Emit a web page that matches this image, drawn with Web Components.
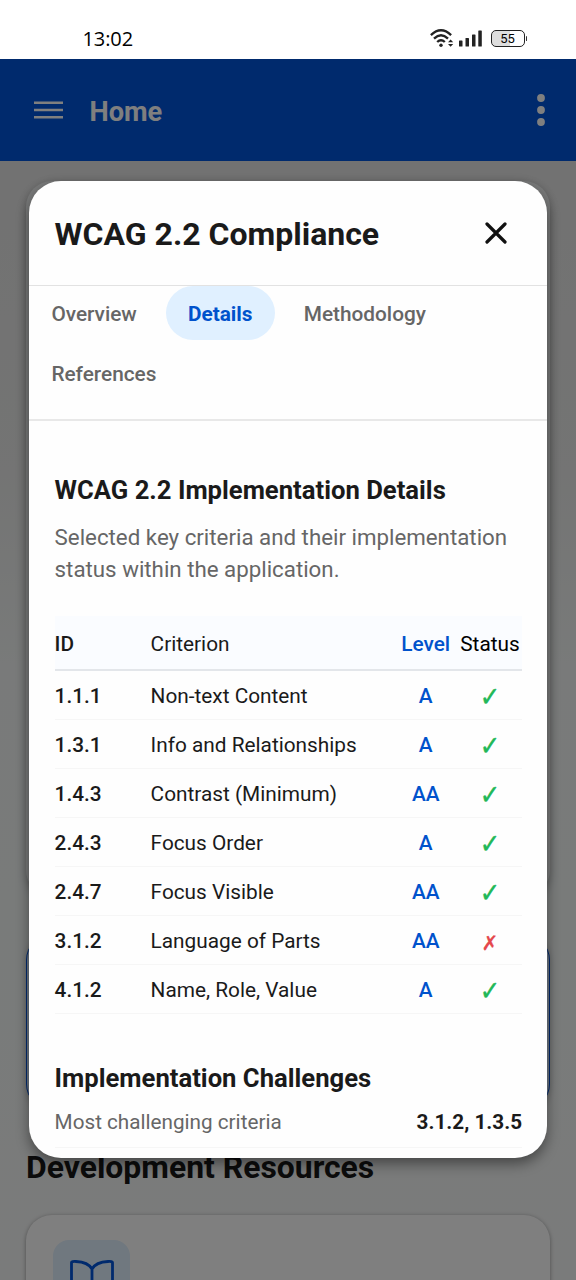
<!DOCTYPE html>
<html lang="en">
<head>
<meta charset="utf-8">
<title>WCAG 2.2 Compliance</title>
<style>
html,body{margin:0;padding:0;height:1280px;overflow:hidden;background:#fff;font-family:Roboto,"Liberation Sans",sans-serif}
</style>
</head>
<body>
<app-screen></app-screen>
<script>
function define(name, html){
  const t=document.createElement('template');
  t.innerHTML=html;
  customElements.define(name,class extends HTMLElement{
    constructor(){super();this.attachShadow({mode:'open'}).append(t.content.cloneNode(true));}
  });
}

define('status-bar',`
<style>
:host{display:flex;box-sizing:border-box;height:59px;background:#fff;padding:28px 49px 0 82.500px;justify-content:space-between;align-items:flex-start;color:#000}
.time{font:500 20px/22px "Open Sans",Roboto,sans-serif;letter-spacing:-.1px}
svg{display:block}
.right{display:flex;align-items:center;height:21px}
.signal{margin:0 9px 0 5px}
.bat{display:flex;align-items:center;gap:1px}
.cell{box-sizing:border-box;width:34px;height:17px;border:1.5px solid #222;border-radius:5px;font:400 13px/15px Roboto,sans-serif;text-align:center;background:linear-gradient(90deg,#ddd 55%,#fff 55%)}
.nub{width:1.5px;height:5px;background:#333;border-radius:1px}
</style>
<span class="time">13:02</span>
<div class="right">
<svg width="24" height="19" viewBox="0 0 24 19" fill="none" stroke="#222" stroke-width="2.400"><path d="M.9 6.2Q11 -3.6 21.1 6.2M4 9.6Q11 3 18 9.6M7.2 13Q11 9.4 14.8 13"/><circle cx="11" cy="16.300" r="1.7" fill="#222" stroke="none"/><path d="M18 13.200L20.6 10.4 23.200 13.200zM18 15L20.6 17.8 23.200 15z" fill="#222" stroke="none"/></svg>
<svg class="signal" width="23" height="17" viewBox="0 0 23 17" fill="#222"><rect y="10.5" width="3.5" height="6" rx=".6"/><rect x="6.5" y="8" width="3.5" height="8.500" rx=".6"/><rect x="13" y="4.500" width="3.500" height="12" rx=".6"/><rect x="19.300" y=".5" width="3.500" height="16" rx=".6"/></svg>
<div class="bat"><div class="cell">55</div><div class="nub"></div></div>
</div>`);

define('app-bar',`
<style>
:host{display:flex;box-sizing:border-box;height:102px;background:#0054db;align-items:center;padding:0 30px 0 33.500px;color:#fff}
.title{font:700 27.200px/32px Roboto,sans-serif;margin-left:27px;flex:1;padding-top:3px}
svg{display:block}
</style>
<svg width="29" height="18" viewBox="0 0 29 18" stroke="#fff" stroke-width="2.400"><path d="M0 1.700h29M0 9h29M0 16.300h29"/></svg>
<span class="title"><slot></slot></span>
<svg width="10" height="32" viewBox="0 0 10 32" fill="#fff"><circle cx="5" cy="4" r="3.900"/><circle cx="5" cy="16" r="3.900"/><circle cx="5" cy="28" r="3.900"/></svg>`);

define('home-page',`
<style>
:host{display:flex;flex-direction:column;box-sizing:border-box;height:1119px;padding:20px 26px 0;background:linear-gradient(#e4e4e4,#e8e9e8 28%,#f2f5f4 45%,#f2f6f5 66%,#f5f6f6);overflow:hidden}
.hero{height:715px;border-radius:26px;flex:none;background:#f0f2f2;box-shadow:0 3px 8px rgba(0,0,0,.25)}
.card{box-sizing:border-box;flex:none;border-radius:26px}
.blue{margin-top:38px;height:176px;background:#d8e8ff;border:1.600px solid #0050d8;box-shadow:0 2px 6px rgba(0,0,0,.2)}
h2{margin:39px 0 0;font:700 31.900px/36px Roboto,sans-serif;color:#181818}
.resource{margin-top:30px;height:180px;background:#fff;box-shadow:0 1px 4px rgba(0,0,0,.38);padding:25px 27px}
.icon{width:77px;height:77px;border-radius:16px;background:#e0f0ff;display:flex;align-items:center;justify-content:center}
</style>
<div class="hero"></div>
<div class="card blue"></div>
<h2>Development Resources</h2>
<div class="card resource"><div class="icon"><svg width="48" height="48" viewBox="0 0 48 48" fill="none" stroke="#0054db" stroke-width="2.800" stroke-linejoin="round"><path d="M24 14Q20 7 8 6.500q-4.500-.2-4.500 1v31Q20 37 24 42Q28 37 44.500 38.500v-31q0-1.200-4.500-1Q28 7 24 14v28"/></svg></div></div>`);

define('modal-header',`
<style>
:host{display:flex;box-sizing:border-box;height:105px;border-bottom:1px solid #e2e2e2;align-items:center;justify-content:space-between;padding:0 40.500px 0 25.600px;color:#1a1a1a}
h1{margin:0;font:700 32px/38px Roboto,sans-serif;padding-top:2px}
svg{display:block}
</style>
<h1><slot></slot></h1>
<svg width="22" height="22" viewBox="0 0 22 22" stroke="#111" stroke-width="3.200" stroke-linecap="round"><path d="M2 2l18 18M20 2L2 20"/></svg>`);

define('tab-item',`
<style>
:host{display:flex;align-items:center;box-sizing:border-box;height:54px;padding:2px 22.400px 0;border-radius:27px;font:500 20.800px/25px Roboto,sans-serif;color:#666}
:host([active]){background:#e0f0ff;color:#0052cc;font-weight:700}
</style><slot></slot>`);

define('tab-bar',`
<style>
:host{display:flex;flex-wrap:wrap;align-content:flex-start;box-sizing:border-box;height:135px;column-gap:6.400px;row-gap:6px;border-bottom:2px solid #e8e8e8}
</style><slot></slot>`);

define('criteria-row',`
<style>
:host{display:grid;grid-template-columns:96px 1fr 64px 64px;align-items:center;box-sizing:border-box;height:49px;padding-top:2px;border-bottom:1px solid #f6f6f6;font:400 20.800px/25px Roboto,sans-serif;color:#1a1a1a;white-space:nowrap}
:host([head]){height:55px;padding-top:3px;background:#fafcff;border-bottom:2px solid #e3e6ea}
.id,.level{font-weight:500}
.level{color:#0052cc;text-align:center;padding-right:.600px}
.status{display:flex;justify-content:center;color:#000}
</style>
<span class="id"><slot name="id"></slot></span><span><slot></slot></span><span class="level"><slot name="level"></slot></span><span class="status"><slot name="status"></slot></span>`);

define('status-mark',`
<style>
:host{display:block;font:400 24.500px/26px "DejaVu Sans",sans-serif;color:#22b858;-webkit-text-stroke:.35px currentColor;transform:translateY(1px) scaleY(1.120)}
:host([fail]){color:#e5484d;font-size:20px;-webkit-text-stroke-width:.2px;padding-top:3px;transform:none}
</style><slot></slot>`);

define('metric-row',`
<style>
:host{display:flex;justify-content:space-between;align-items:center;box-sizing:border-box;height:50px;border-bottom:1px solid #f6f6f6;font:400 20.700px/25px Roboto,sans-serif;color:#666}
.value{font-weight:700;color:#1a1a1a}
</style><span><slot></slot></span><span class="value"><slot name="value"></slot></span>`);

define('details-panel',`
<style>
:host{display:block;padding:53px 25px 0 25.600px}
h3{margin:0;font:700 25.650px/32px Roboto,sans-serif;color:#1a1a1a}
p{margin:15px 0 31px;font:400 22.300px/32px Roboto,sans-serif;color:#666;white-space:nowrap}
.second{margin-top:48px;margin-bottom:4px}
</style>
<h3>WCAG 2.2 Implementation Details</h3>
<p>Selected key criteria and their implementation<br>status within the application.</p>
<div class="rows"><slot></slot></div>
<h3 class="second">Implementation Challenges</h3>
<metric-row>Most challenging criteria<span slot="value">3.1.2, 1.3.5</span></metric-row>`);

define('modal-dialog',`
<style>
:host{display:block;box-sizing:border-box;width:518px;height:977px;border-radius:32px;background:#fefefe;overflow:hidden;box-shadow:0 6px 13px rgba(0,0,0,.42)}
</style><slot></slot>`);

define('app-screen',`
<style>
:host{display:block;position:relative;width:576px;height:1280px;overflow:hidden}
.overlay{position:absolute;inset:59px 0 0;background:rgba(0,0,0,.5);padding:122px 29px 0}
</style>
<status-bar></status-bar>
<app-bar>Home</app-bar>
<home-page></home-page>
<div class="overlay"><modal-dialog>
<modal-header>WCAG 2.2 Compliance</modal-header>
<tab-bar><tab-item>Overview</tab-item><tab-item active>Details</tab-item><tab-item>Methodology</tab-item><tab-item>References</tab-item></tab-bar>
<details-panel>
<criteria-row head><span slot="id">ID</span>Criterion<span slot="level">Level</span><span slot="status">Status</span></criteria-row>
<criteria-row><span slot="id">1.1.1</span>Non-text Content<span slot="level">A</span><status-mark slot="status">✓</status-mark></criteria-row>
<criteria-row><span slot="id">1.3.1</span>Info and Relationships<span slot="level">A</span><status-mark slot="status">✓</status-mark></criteria-row>
<criteria-row><span slot="id">1.4.3</span>Contrast (Minimum)<span slot="level">AA</span><status-mark slot="status">✓</status-mark></criteria-row>
<criteria-row><span slot="id">2.4.3</span>Focus Order<span slot="level">A</span><status-mark slot="status">✓</status-mark></criteria-row>
<criteria-row><span slot="id">2.4.7</span>Focus Visible<span slot="level">AA</span><status-mark slot="status">✓</status-mark></criteria-row>
<criteria-row><span slot="id">3.1.2</span>Language of Parts<span slot="level">AA</span><status-mark slot="status" fail>✗</status-mark></criteria-row>
<criteria-row><span slot="id">4.1.2</span>Name, Role, Value<span slot="level">A</span><status-mark slot="status">✓</status-mark></criteria-row>
</details-panel>
</modal-dialog></div>`);
</script>
</body>
</html>
